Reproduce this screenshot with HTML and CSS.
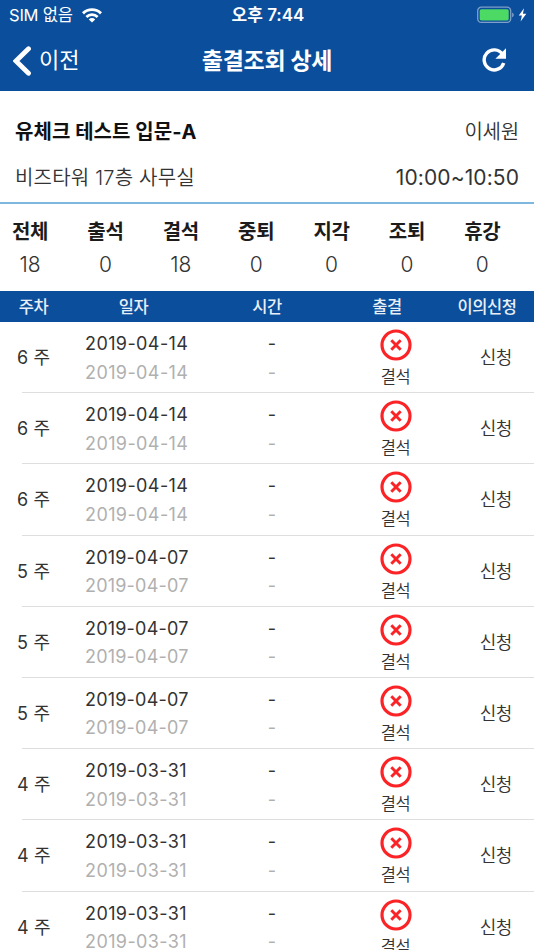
FILE: index.html
```html
<!DOCTYPE html>
<html lang="ko">
<head>
<meta charset="utf-8">
<title>출결조회 상세</title>
<link rel="stylesheet" href="styles.css">
</head>
<body>
<svg class="defs" aria-hidden="true">
  <symbol id="absent" viewBox="0 0 32 32">
    <circle cx="16" cy="16" r="14" fill="none" stroke="#fb2326" stroke-width="3.2"/>
    <path d="M11.3 11.3l9.4 9.4M20.7 11.3l-9.4 9.4" fill="none" stroke="#fb2326" stroke-width="2.9"/>
  </symbol>
</svg>
<header class="top">
  <div class="status">
    <div class="carrier"><span>SIM 없음</span>
      <svg class="wifi" viewBox="0 0 20 15"><path d="M0 4.3a14.2 14.2 0 0 1 20 0L18 6.4a11.3 11.3 0 0 0-16 0zM3.4 7.9a9.4 9.4 0 0 1 13.2 0l-2 2.1a6.5 6.5 0 0 0-9.2 0zM6.8 11.4a4.6 4.6 0 0 1 6.4 0L10 14.6z" fill="#fff"/></svg>
    </div>
    <div class="clock">오후 7:44</div>
    <svg class="battery" viewBox="0 0 50 18"><rect x=".7" y="1.2" width="33" height="15.2" rx="3.6" fill="none" stroke="#7f9fca" stroke-width="1.3"/><rect x="2.7" y="3.2" width="29" height="11.2" rx="1.6" fill="#4cd964"/><path d="M35.1 6.4c2.2.8 2.2 4 0 4.8z" fill="#7f9fca"/><path d="M47 2.2L41.8 9.6h3.1L43.6 15.6 49.3 7.8h-3.4z" fill="#fff"/></svg>
  </div>
  <nav class="nav">
    <div class="back"><svg viewBox="0 0 18 30"><path d="M15.5 2.8L3 15l12.5 12.2" fill="none" stroke="#fff" stroke-width="4.8" stroke-linecap="round" stroke-linejoin="miter"/></svg><span>이전</span></div>
    <h1>출결조회 상세</h1>
    <svg class="refresh" viewBox="0 0 24 24"><path d="M20.4 6.2A10 10 0 1 0 21.7 14.9" fill="none" stroke="#fff" stroke-width="3.4"/><path d="M24 .2V10.8H13.4z" fill="#fff"/></svg>
  </nav>
</header>
<main>
  <section class="course">
    <div class="line"><strong>유체크 테스트 입문-A</strong><span class="teacher">이세원</span></div>
    <div class="line"><span class="place">비즈타워 17층 사무실</span><span class="hours">10:00~10:50</span></div>
  </section>
  <dl class="summary">
    <div><dt>전체</dt><dd>18</dd></div>
    <div><dt>출석</dt><dd>0</dd></div>
    <div><dt>결석</dt><dd>18</dd></div>
    <div><dt>중퇴</dt><dd>0</dd></div>
    <div><dt>지각</dt><dd>0</dd></div>
    <div><dt>조퇴</dt><dd>0</dd></div>
    <div><dt>휴강</dt><dd>0</dd></div>
  </dl>
  <div class="heads"><span>주차</span><span>일자</span><span>시간</span><span>출결</span><span>이의신청</span></div>
  <ul class="list">
    <li><span class="week">6 주</span><div class="date"><b>2019-04-14</b><i>2019-04-14</i></div><div class="time"><b>-</b><i>-</i></div><div class="state"><svg><use href="#absent"/></svg><span>결석</span></div><span class="apply">신청</span></li>
    <li><span class="week">6 주</span><div class="date"><b>2019-04-14</b><i>2019-04-14</i></div><div class="time"><b>-</b><i>-</i></div><div class="state"><svg><use href="#absent"/></svg><span>결석</span></div><span class="apply">신청</span></li>
    <li><span class="week">6 주</span><div class="date"><b>2019-04-14</b><i>2019-04-14</i></div><div class="time"><b>-</b><i>-</i></div><div class="state"><svg><use href="#absent"/></svg><span>결석</span></div><span class="apply">신청</span></li>
    <li><span class="week">5 주</span><div class="date wide"><b>2019-04-07</b><i>2019-04-07</i></div><div class="time"><b>-</b><i>-</i></div><div class="state"><svg><use href="#absent"/></svg><span>결석</span></div><span class="apply">신청</span></li>
    <li><span class="week">5 주</span><div class="date wide"><b>2019-04-07</b><i>2019-04-07</i></div><div class="time"><b>-</b><i>-</i></div><div class="state"><svg><use href="#absent"/></svg><span>결석</span></div><span class="apply">신청</span></li>
    <li><span class="week">5 주</span><div class="date wide"><b>2019-04-07</b><i>2019-04-07</i></div><div class="time"><b>-</b><i>-</i></div><div class="state"><svg><use href="#absent"/></svg><span>결석</span></div><span class="apply">신청</span></li>
    <li><span class="week">4 주</span><div class="date"><b>2019-03-31</b><i>2019-03-31</i></div><div class="time"><b>-</b><i>-</i></div><div class="state"><svg><use href="#absent"/></svg><span>결석</span></div><span class="apply">신청</span></li>
    <li><span class="week">4 주</span><div class="date"><b>2019-03-31</b><i>2019-03-31</i></div><div class="time"><b>-</b><i>-</i></div><div class="state"><svg><use href="#absent"/></svg><span>결석</span></div><span class="apply">신청</span></li>
    <li><span class="week">4 주</span><div class="date"><b>2019-03-31</b><i>2019-03-31</i></div><div class="time"><b>-</b><i>-</i></div><div class="state"><svg><use href="#absent"/></svg><span>결석</span></div><span class="apply">신청</span></li>
  </ul>
</main>
</body>
</html>
```
FILE: styles.css
```css
* { box-sizing: border-box; margin: 0; padding: 0; }
html, body { height: 950px; overflow: hidden; }
body {
  width: 534px;
  background: #fff;
  color: #333;
  font-family: Inter, "Noto Sans CJK KR", sans-serif;
  font-weight: 350;
  white-space: nowrap;
}
svg { display: block; flex: none; }
.defs { display: none; }

.top { height: 91px; background: #0b4e9b; color: #fff; }
.status { height: 30px; display: grid; grid-template-columns: 1fr auto 1fr; align-items: center; padding: 0 7px 0 9px; }
.carrier { display: flex; align-items: center; gap: 9px; font-size: 16.5px; font-weight: 400; letter-spacing: -.2px; line-height: 30px; }
.wifi { width: 20px; height: 15px; }
.clock { font-size: 17px; font-weight: 600; line-height: 30px; }
.battery { width: 50px; height: 18px; justify-self: end; }
.nav { height: 61px; display: grid; grid-template-columns: 1fr auto 1fr; align-items: center; }
.back { display: flex; align-items: center; gap: 8px; padding-left: 13px; font-size: 22px; font-weight: 400; line-height: 59px; }
.back svg { width: 18px; height: 30px; }
.nav h1 { font-size: 23px; font-weight: 700; letter-spacing: -.3px; line-height: 60px; }
.refresh { width: 24px; height: 24px; justify-self: end; margin: 0 28px 2px 0; }

.course { height: 113px; padding: 18px 15px 0; border-bottom: 2px solid #7fb8df; }
.line { height: 46px; display: flex; justify-content: space-between; font-size: 20px; line-height: 46px; }
.line strong { color: #111; font-weight: 700; letter-spacing: .05px; }
.teacher { letter-spacing: -.2px; }
.place { letter-spacing: .2px; }
.hours { font-size: 21px; font-weight: 400; letter-spacing: .1px; }

.summary { height: 87px; padding-top: 12px; margin-left: -7.7px; display: grid; grid-template-columns: repeat(7, 75.4px); }
.summary div { text-align: center; }
.summary dt { color: #1c1c1c; font-size: 20px; font-weight: 700; letter-spacing: -.3px; line-height: 33px; }
.summary dd { font-size: 21px; line-height: 31px; }

.heads { height: 31px; display: grid; grid-template-columns: 67px 133px 134px 106px 94px; background: #0b4e9b; color: #e9eff6; font-size: 16.5px; font-weight: 500; letter-spacing: -.4px; line-height: 32px; text-align: center; }

.list { list-style: none; }
.list li {
  height: 71.2px;
  display: grid;
  grid-template-columns: 85px 152px 70px 177px 50px;
  background: linear-gradient(#dedede, #dedede) 22px 100% / 512px 1px no-repeat;
  font-size: 18px;
}
.list b, .list i { display: block; font-style: normal; font-weight: 400; line-height: 28.5px; }
.list i { color: #b0b0b0; }
.week { padding-left: 17px; line-height: 71px; letter-spacing: .2px; font-weight: 400; }
.date, .time { padding-top: 8px; }
.date { letter-spacing: .4px; }
.date.wide { letter-spacing: .2px; }
.time { text-align: center; }
.state { display: flex; flex-direction: column; align-items: center; padding-top: 7px; font-size: 16.5px; line-height: 32px; letter-spacing: -.4px; }
.state svg { width: 32px; height: 32px; }
.apply { justify-self: end; margin-right: 22px; line-height: 71px; letter-spacing: -.4px; }
```
